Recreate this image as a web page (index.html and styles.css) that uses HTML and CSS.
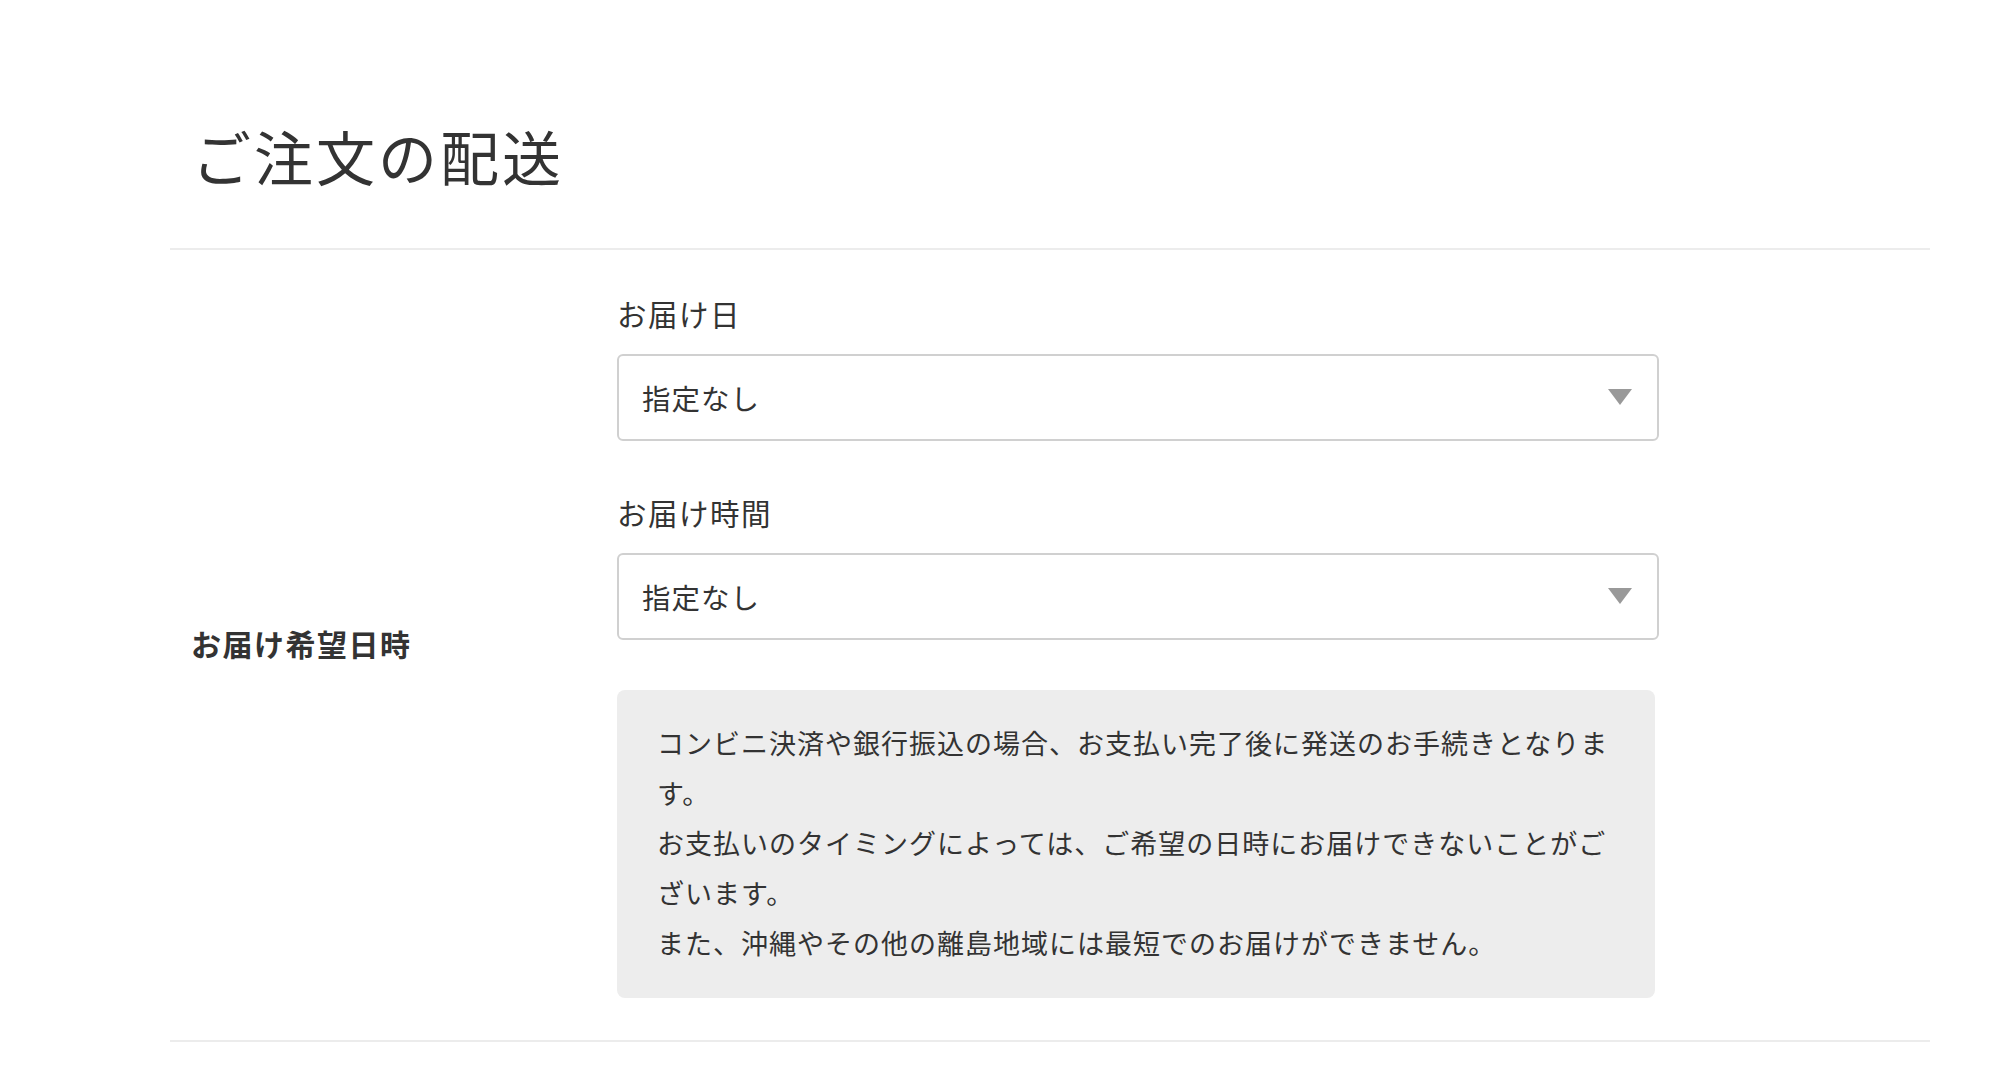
FILE: index.html
```html
<!DOCTYPE html>
<html lang="ja">
<head>
    <meta charset="UTF-8">
    <meta name="viewport" content="width=device-width, initial-scale=1.0">
    <title>ご注文の配送</title>
    <link rel="stylesheet" href="styles.css">
</head>
<body>
    <div class="page">
        <div class="header">
            <h1>ご注文の配送</h1>
        </div>
        <div class="section">
            <div class="section-label">お届け希望日時</div>
            <div class="section-body">
                <div class="field">
                    <label for="day">お届け日</label>
                    <div class="select-wrap">
                        <select id="day">
                            <option>指定なし</option>
                        </select>
                    </div>
                </div>
                <div class="field">
                    <label for="time">お届け時間</label>
                    <div class="select-wrap">
                        <select id="time">
                            <option>指定なし</option>
                        </select>
                    </div>
                </div>
                <div class="note">
                    <p>コンビニ決済や銀行振込の場合、お支払い完了後に発送のお手続きとなります。</p>
                    <p>お支払いのタイミングによっては、ご希望の日時にお届けできないことがございます。</p>
                    <p>また、沖縄やその他の離島地域には最短でのお届けができません。</p>
                </div>
            </div>
        </div>
    </div>
</body>
</html>
```

FILE: styles.css
```css
body {
    font-family: "Noto Sans CJK JP", "Noto Sans", sans-serif;
    color: #333;
    background-color: #fff;
    margin: 0;
    padding: 0;
}
.page {
    padding: 0 76px 0 170px;
}
.header {
    padding: 114px 0 50px 22px;
    border-bottom: 2px solid #ececec;
}
h1 {
    margin: 0;
    font-size: 59px;
    font-weight: 400;
    line-height: 84px;
    letter-spacing: 3px;
}
.section {
    display: grid;
    grid-template-columns: 447px 1042px;
    align-items: center;
    padding: 42px 0 42px;
    border-bottom: 2px solid #ececec;
}
.section-label {
    padding-left: 21px;
    font-size: 30px;
    font-weight: 700;
    letter-spacing: 1.5px;
    margin-top: -4px;
}
.field {
    margin-bottom: 50px;
}
.field label {
    display: block;
    font-size: 29.5px;
    line-height: 42px;
    letter-spacing: 1.5px;
    margin-bottom: 20px;
}
.select-wrap {
    position: relative;
}
.select-wrap::after {
    content: "";
    position: absolute;
    right: 27px;
    top: 35px;
    border-left: 12px solid transparent;
    border-right: 12px solid transparent;
    border-top: 16px solid #999;
    pointer-events: none;
}
select {
    appearance: none;
    -webkit-appearance: none;
    display: block;
    width: 100%;
    height: 87px;
    padding: 0 60px 0 23px;
    font-family: inherit;
    font-size: 28.5px;
    letter-spacing: 1px;
    color: #333;
    background-color: #fff;
    border: 2px solid #d0d0d0;
    border-radius: 6px;
    box-sizing: border-box;
}
.note {
    width: 1038px;
    box-sizing: border-box;
    padding: 28px 40px 30px;
    background-color: #ededed;
    border-radius: 8px;
    font-size: 27px;
    line-height: 50px;
    letter-spacing: 1px;
}
.note p {
    margin: 0;
}
```
